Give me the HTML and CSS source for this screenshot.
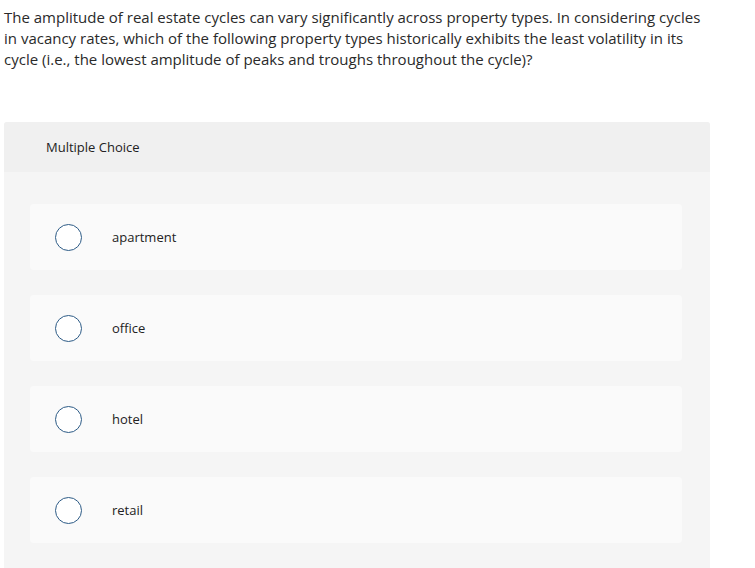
FILE: index.html
```html
<!DOCTYPE html>
<html>
<head>
<meta charset="utf-8">
<link rel="stylesheet" href="styles.css">
</head>
<body>
<div class="page">
  <p class="question">The amplitude of real estate cycles can vary significantly across property types. In considering cycles in vacancy rates, which of the following property types historically exhibits the least volatility in its cycle (i.e., the lowest amplitude of peaks and troughs throughout the cycle)?</p>
  <div class="mc">
    <div class="mc-header">Multiple Choice</div>
    <div class="mc-body">
      <div class="option"><span class="radio"></span><span class="label">apartment</span></div>
      <div class="option"><span class="radio"></span><span class="label">office</span></div>
      <div class="option"><span class="radio"></span><span class="label">hotel</span></div>
      <div class="option"><span class="radio"></span><span class="label">retail</span></div>
    </div>
  </div>
</div>
</body>
</html>
```

FILE: styles.css
```css
html, body {
  margin: 0;
  padding: 0;
  background: #fff;
}
body {
  font-family: "Open Sans", "Liberation Sans", sans-serif;
  color: #222;
}
.page {
  padding: 7px 0 0 4px;
}
.question {
  margin: 0;
  width: 712px;
  font-size: 15px;
  line-height: 21px;
  color: #2a2a2a;
}
.mc {
  margin-top: 52px;
  background: #f5f5f5;
  border-radius: 3px 3px 0 0;
  width: 706px;
}
.mc-header {
  background: #f0f0f0;
  height: 50px;
  display: flex;
  align-items: center;
  padding-left: 42px;
  font-size: 13px;
  color: #222;
  border-radius: 3px 3px 0 0;
}
.mc-body {
  padding: 32px 28px 30px 26px;
  display: flex;
  flex-direction: column;
  gap: 25px;
}
.option {
  height: 66px;
  background: #fafafa;
  border-radius: 4px;
  display: flex;
  align-items: center;
  padding-left: 25px;
}
.radio {
  width: 25px;
  height: 25px;
  border: 1.5px solid #2d5b86;
  border-radius: 50%;
  background: #fff;
  flex: none;
}
.label {
  margin-left: 30px;
  font-size: 13px;
  color: #222;
}
```
